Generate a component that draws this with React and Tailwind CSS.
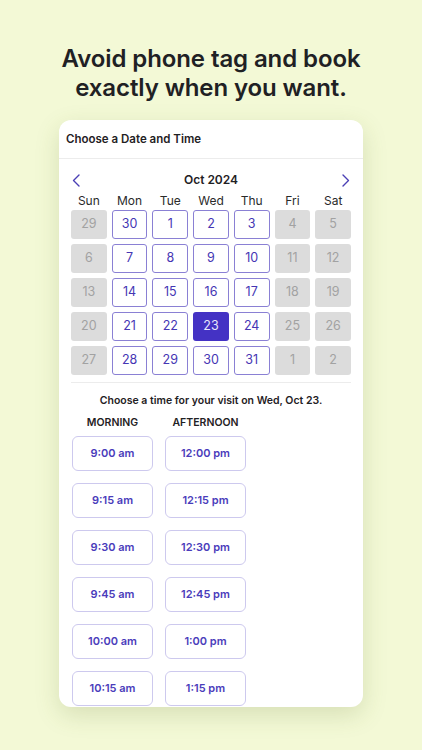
import React from "react";

const weeks = [
  [29, 30, 1, 2, 3, 4, 5],
  [6, 7, 8, 9, 10, 11, 12],
  [13, 14, 15, 16, 17, 18, 19],
  [20, 21, 22, 23, 24, 25, 26],
  [27, 28, 29, 30, 31, 1, 2],
];

const days = ["Sun", "Mon", "Tue", "Wed", "Thu", "Fri", "Sat"];

const morning = ["9:00 am", "9:15 am", "9:30 am", "9:45 am", "10:00 am", "10:15 am"];
const afternoon = ["12:00 pm", "12:15 pm", "12:30 pm", "12:45 pm", "1:00 pm", "1:15 pm"];

function Chevron({ dir }) {
  return (
    <svg width="8" height="13" viewBox="0 0 8 13" fill="none">
      <polyline
        points={dir === "left" ? "7,1 1.5,6.5 7,12" : "1,1 6.5,6.5 1,12"}
        stroke="#4a3fb5"
        strokeWidth="1.4"
        strokeLinecap="round"
        strokeLinejoin="round"
      />
    </svg>
  );
}

function DayCell({ day, col }) {
  // sundays, fridays and saturdays are closed
  const closed = col === 0 || col >= 5;
  if (closed) {
    return (
      <div className="h-[29px] rounded-[3px] bg-[#dcdcdc] flex items-center justify-center text-[12.5px] text-[#a2a2a2]">
        {day}
      </div>
    );
  }
  if (day === 23) {
    return (
      <div className="h-[29px] rounded-[3px] bg-[#4432c4] flex items-center justify-center text-[12.5px] text-[#e8e6fb]">
        {day}
      </div>
    );
  }
  return (
    <div className="h-[29px] rounded-[3px] border-[1.5px] border-[#8a80d4] bg-white flex items-center justify-center text-[12.5px] text-[#4536b4]">
      {day}
    </div>
  );
}

function Slot({ label }) {
  return (
    <div className="h-[35px] w-[81px] rounded-[6px] border border-[#cdc9ee] bg-white flex items-center justify-center text-[11px] font-semibold text-[#4a3cbb]">
      {label}
    </div>
  );
}

export default function App() {
  return (
    <div
      className="w-full h-[750px] bg-[#f3f9d6] overflow-hidden flex flex-col items-center"
      style={{ fontFamily: "Inter, 'Liberation Sans', sans-serif" }}
    >
      <h1 className="pt-[44px] text-center text-[24px] leading-[29px] font-semibold text-[#1f2124] tracking-[-0.1px]">
        Avoid phone tag and book
        <br />
        exactly when you want.
      </h1>

      <div className="mt-[18px] w-[304px] h-[587px] shrink-0 bg-white rounded-[12px] overflow-hidden shadow-[0_8px_24px_rgba(90,110,40,0.18)]">
        {/* header */}
        <div className="h-[39px] flex items-center pl-[7px] pt-[2px] border-b border-[#ececec] text-[11.5px] font-semibold text-[#1f2124]">
          Choose a Date and Time
        </div>

        <div className="px-[12px]">
          {/* month switcher */}
          <div className="mt-[12px] h-[18px] flex items-center justify-between px-[1px]">
            <Chevron dir="left" />
            <span className="text-[12px] font-semibold text-[#1f2124]">Oct 2024</span>
            <Chevron dir="right" />
          </div>

          <div className="grid grid-cols-7 gap-x-[5px] h-[20px] items-end">
            {days.map((d) => (
              <span key={d} className="text-center text-[12px] leading-[16px] text-[#2a2a2a]">
                {d}
              </span>
            ))}
          </div>

          <div className="mt-[1px] grid grid-cols-7 gap-x-[5px] gap-y-[5px]">
            {weeks.map((w, r) =>
              w.map((d, c) => <DayCell key={`${r}-${c}`} day={d} col={c} />)
            )}
          </div>

          <div className="mt-[7px] border-t border-[#ececec]" />

          <p className="mt-[10px] h-[16px] flex items-center justify-center text-[10.5px] font-semibold text-[#1f2124]">
            Choose a time for your visit on Wed, Oct 23.
          </p>
        </div>

        {/* time slots */}
        <div className="pl-[13px] mt-[6px] flex gap-x-[12px]">
          <div className="flex flex-col w-[81px]">
            <span className="h-[16px] flex items-center justify-center text-[10.5px] font-semibold text-[#1f2124]">
              MORNING
            </span>
            <div className="mt-[5px] flex flex-col gap-y-[12px]">
              {morning.map((t) => (
                <Slot key={t} label={t} />
              ))}
            </div>
          </div>
          <div className="flex flex-col w-[81px]">
            <span className="h-[16px] flex items-center justify-center text-[10.5px] font-semibold text-[#1f2124]">
              AFTERNOON
            </span>
            <div className="mt-[5px] flex flex-col gap-y-[12px]">
              {afternoon.map((t) => (
                <Slot key={t} label={t} />
              ))}
            </div>
          </div>
        </div>
      </div>
    </div>
  );
}
